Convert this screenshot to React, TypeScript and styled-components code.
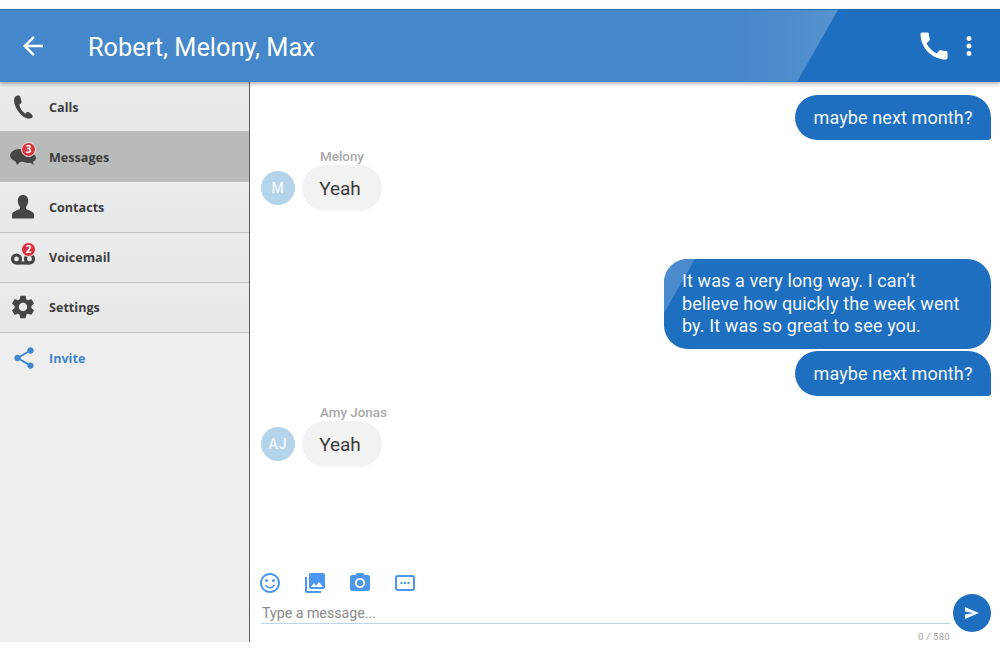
import React from "react";
import styled, { createGlobalStyle } from "styled-components";
import {
  MdArrowBack, MdCall, MdMoreVert, MdSettings, MdShare, MdPhotoLibrary,
  MdPhotoCamera, MdOutlineSentimentSatisfied,
} from "react-icons/md";

const Global = createGlobalStyle`
  html, body { margin: 0; padding: 0; background: #fff; }
  body { font-family: Roboto, "Liberation Sans", sans-serif; }
  * { box-sizing: border-box; }
`;

const Page = styled.div`
  width: 1000px;
  height: 650px;
  padding: 9px 0 8px;
  display: flex;
  flex-direction: column;
  overflow: hidden;
  background: #fff;
`;

const Header = styled.header`
  position: relative;
  z-index: 2;
  height: 73px;
  flex: none;
  display: flex;
  align-items: center;
  padding: 0 20px;
  background: #4487ca;
  color: #fff;
  border-top: 1px solid #2f6da8;
  box-shadow: 0 2px 4px rgba(0, 0, 0, 0.3);
`;

const HeaderSheen = styled.div`
  position: absolute;
  inset: 0;
  background: linear-gradient(90deg, rgba(255, 255, 255, 0) 740px, rgba(255, 255, 255, 0.09) 830px);
  clip-path: polygon(700px 0, 838px 0, 797px 100%, 659px 100%);
`;

const HeaderAccent = styled.div`
  position: absolute;
  inset: 0;
  background: #1e6fc0;
  clip-path: polygon(838px 0, 1000px 0, 1000px 100%, 797px 100%);
`;

const BackButton = styled.span`
  position: relative;
  display: flex;
  width: 30px;
  font-size: 30px;
  margin-left: -2px;
`;

const Title = styled.h1`
  position: relative;
  margin: 0 0 0 40px;
  padding-top: 2px;
  font-size: 25.3px;
  font-weight: 400;
  flex: 1;
`;

const HeaderActions = styled.div`
  position: relative;
  display: flex;
  align-items: center;
  margin-right: -4px;
  font-size: 30px;
`;

const CallIcon = styled(MdCall)`
  font-size: 36px;
  margin-right: 2px;
`;

const Body = styled.div`
  flex: 1;
  min-height: 0;
  display: flex;
`;

const Sidebar = styled.nav`
  width: 250px;
  flex: none;
  border-right: 1px solid #5c5e60;
  background: #eeeeee;
`;

const NavRow = styled.div<{ $active?: boolean; $plain?: boolean }>`
  height: 50.2px;
  display: flex;
  align-items: center;
  padding-left: 9px;
  background: ${(p) =>
    p.$active ? "#b9baba" : p.$plain ? "transparent" : "linear-gradient(180deg, #ebebec, #e7e8e8)"};
  border-bottom: ${(p) => (p.$plain ? "none" : "1px solid #bfc0c1")};
`;

const NavIcon = styled.span`
  position: relative;
  width: 28px;
  height: 28px;
  display: flex;
  align-items: center;
  justify-content: center;
  margin-right: 12px;
  color: #454545;
`;

const InviteIcon = styled(NavIcon)`
  color: #3f86cf;
  padding-left: 2px;
`;

const Badge = styled.span`
  position: absolute;
  top: -1px;
  right: 1px;
  width: 15px;
  height: 15px;
  border-radius: 50%;
  background: #d9333f;
  border: 1px solid #f2f2f2;
  color: #fff;
  font: 700 10px/13px "Open Sans", sans-serif;
  text-align: center;
`;

const NavLabel = styled.span<{ $link?: boolean }>`
  font-family: "Open Sans", sans-serif;
  font-size: 12.6px;
  font-weight: 700;
  margin-top: ${(p) => (p.$link ? 0 : 1)}px;
  color: ${(p) => (p.$link ? "#3f86cf" : "#3e3e3e")};
`;

const Chat = styled.main`
  flex: 1;
  min-width: 0;
  display: flex;
  flex-direction: column;
  padding: 13px 9px 0 11px;
`;

const Messages = styled.div`
  flex: 1;
  min-height: 0;
  display: flex;
  flex-direction: column;
`;

const Outgoing = styled.div<{ $gap: number }>`
  align-self: flex-end;
  margin-top: ${(p) => p.$gap}px;
  padding: 12px 18px 10.500px;
  background: #1e6fc0;
  color: #f2f7fc;
  font-size: 18px;
  line-height: 22.5px;
  border-radius: 23px 23px 3px 23px;
  letter-spacing: 0.11px;
  white-space: nowrap;
  min-width: 196px;
  text-align: center;
`;

const LongBubble = styled(Outgoing)`
  position: relative;
  overflow: hidden;
  border-radius: 24px;
  text-align: left;
  padding: 11px 30px 11.500px 18px;
  margin-left: auto;
  width: 327px;
  span { position: relative; }
  &::before {
    content: "";
    position: absolute;
    left: 0;
    top: 0;
    width: 31px;
    height: 54px;
    background: #4a8bcd;
    clip-path: polygon(0 0, 100% 0, 0 100%);
  }
`;

const Incoming = styled.div<{ $gap: number }>`
  margin-top: ${(p) => p.$gap}px;
  display: grid;
  grid-template-columns: 34px auto;
  column-gap: 7px;
  justify-content: start;
  align-items: center;
`;

const Sender = styled.div`
  grid-column: 2;
  padding-left: 18px;
  height: 18px;
  font-size: 13.4px;
  line-height: 20px;
  font-weight: 500;
  color: #a9a9a9;
  white-space: nowrap;
`;

const Avatar = styled.div`
  width: 34px;
  height: 34px;
  border-radius: 50%;
  background: #b3d4ea;
  color: #f1f7fb;
  font-size: 14px;
  font-weight: 500;
  letter-spacing: 1px;
  display: flex;
  align-items: center;
  justify-content: center;
`;

const IncomingBubble = styled.div`
  width: 80px;
  height: 46px;
  padding-right: 4px;
  border-radius: 23px;
  background: #f2f2f2;
  color: #3b3b3b;
  font-size: 19px;
  display: flex;
  align-items: center;
  justify-content: center;
`;

const Toolbar = styled.div`
  flex: none;
  display: flex;
  gap: 21px;
  align-items: center;
  color: #4c97f0;
  height: 24px;
  margin-left: -3px;
`;

const ToolIcon = styled.span`
  display: flex;
  width: 24px;
  height: 24px;
  align-items: center;
  justify-content: center;
  font-size: 24px;
`;

const Composer = styled.div`
  flex: none;
  height: 48px;
  display: flex;
  align-items: flex-start;
  gap: 3px;
  margin-top: -1px;
`;

const InputColumn = styled.div`
  flex: 1;
  padding-top: 8px;
`;

const InputText = styled.div`
  height: 22px;
  padding-left: 1px;
  font-size: 14.2px;
  line-height: 22px;
  color: #8a8a8a;
  border-bottom: 1px solid #b9d7e6;
`;

const Counter = styled.div`
  text-align: right;
  font-size: 9.500px;
  line-height: 14px;
  margin-top: 6px;
  color: #a3a3a3;
  letter-spacing: 0.3px;
`;

const SendButton = styled.div`
  width: 38px;
  height: 38px;
  flex: none;
  border-radius: 50%;
  background: #1e6fc0;
  display: flex;
  align-items: center;
  justify-content: center;
`;

const PhoneGlyph = () => (
  <svg width="24" height="26" viewBox="0 0 24 26" fill="currentColor">
    <path d="M7 1.5 C5 1.7 3 3 3 6 C3.2 13 8.500 21 15 24 C17.500 25 20.500 24.600 21.500 23 C22 22 21.500 21 20.800 20.400 L18 18.300 C17 17.700 16 17.900 15.300 18.600 L14.200 19.700 C11 17.500 8.800 13.500 8.300 10.400 L9.800 9.600 C10.500 9.100 10.700 8.300 10.500 7.500 L9.300 2.800 C9 1.900 8.100 1.400 7 1.500 Z" />
  </svg>
);

const ChatGlyph = () => (
  <svg width="28" height="24" viewBox="0 0 28 24" fill="currentColor">
    <ellipse cx="10.500" cy="10.500" rx="9.500" ry="6.500" />
    <path d="M6 15 L8 20 L12 16 Z" />
    <ellipse cx="19" cy="13" rx="8" ry="5" />
    <path d="M20 17 L25 20 L23 15 Z" />
  </svg>
);

const VoicemailGlyph = () => (
  <svg width="28" height="24" viewBox="0 0 28 24" fill="none" stroke="currentColor" strokeWidth="3.200">
    <circle cx="7.500" cy="14" r="4" />
    <circle cx="20.500" cy="14" r="4" />
    <path d="M7.500 18 H20.500" />
  </svg>
);

const PersonGlyph = () => (
  <svg width="26" height="26" viewBox="0 0 26 26" fill="currentColor">
    <path d="M13 1 C9.500 1 7.800 3.500 7.800 6.800 C7.800 9.500 8.800 11.500 10 12.800 L10 15 C7 16.500 2.500 17.500 2 20 L2 24.500 L24 24.500 L24 20 C23.500 17.500 19 16.500 16 15 L16 12.800 C17.200 11.500 18.200 9.500 18.200 6.800 C18.200 3.500 16.500 1 13 1 Z" />
  </svg>
);

const MoreGlyph = () => (
  <svg width="24" height="24" viewBox="0 0 24 24" fill="currentColor">
    <rect x="3" y="5" width="18" height="14" rx="2" fill="none" stroke="currentColor" strokeWidth="2" />
    <circle cx="8.500" cy="12" r="1.200" />
    <circle cx="12" cy="12" r="1.200" />
    <circle cx="15.500" cy="12" r="1.200" />
  </svg>
);

const SendGlyph = () => (
  <svg width="16" height="14" viewBox="0 0 16 14" fill="#eef5fb">
    <path d="M1 1 L15 7 L1 13 L1 8.500 L9 7 L1 5.500 Z" />
  </svg>
);

export default function App() {
  return (
    <Page>
      <Global />
      <Header>
        <HeaderSheen />
        <HeaderAccent />
        <BackButton><MdArrowBack /></BackButton>
        <Title>Robert, Melony, Max</Title>
        <HeaderActions>
          <CallIcon />
          <MdMoreVert />
        </HeaderActions>
      </Header>
      <Body>
        <Sidebar>
          <NavRow>
            <NavIcon><PhoneGlyph /></NavIcon>
            <NavLabel>Calls</NavLabel>
          </NavRow>
          <NavRow $active>
            <NavIcon><ChatGlyph /><Badge>3</Badge></NavIcon>
            <NavLabel>Messages</NavLabel>
          </NavRow>
          <NavRow>
            <NavIcon><PersonGlyph /></NavIcon>
            <NavLabel>Contacts</NavLabel>
          </NavRow>
          <NavRow>
            <NavIcon><VoicemailGlyph /><Badge>2</Badge></NavIcon>
            <NavLabel>Voicemail</NavLabel>
          </NavRow>
          <NavRow>
            <NavIcon><MdSettings size={32} /></NavIcon>
            <NavLabel>Settings</NavLabel>
          </NavRow>
          <NavRow $plain>
            <InviteIcon><MdShare size={28} /></InviteIcon>
            <NavLabel $link>Invite</NavLabel>
          </NavRow>
        </Sidebar>
        <Chat>
          <Messages>
            <Outgoing $gap={0}>maybe next month?</Outgoing>
            <Incoming $gap={7}>
              <Sender>Melony</Sender>
              <Avatar>M</Avatar>
              <IncomingBubble>Yeah</IncomingBubble>
            </Incoming>
            <LongBubble $gap={48}>
              <span>
                It was a very long way. I can’t<br />
                believe how quickly the week went<br />
                by. It was so great to see you.
              </span>
            </LongBubble>
            <Outgoing $gap={2}>maybe next month?</Outgoing>
            <Incoming $gap={7}>
              <Sender>Amy Jonas</Sender>
              <Avatar>AJ</Avatar>
              <IncomingBubble>Yeah</IncomingBubble>
            </Incoming>
          </Messages>
          <Toolbar>
            <ToolIcon><MdOutlineSentimentSatisfied /></ToolIcon>
            <ToolIcon><MdPhotoLibrary /></ToolIcon>
            <ToolIcon><MdPhotoCamera /></ToolIcon>
            <ToolIcon><MoreGlyph /></ToolIcon>
          </Toolbar>
          <Composer>
            <InputColumn>
              <InputText>Type a message...</InputText>
              <Counter>0 / 580</Counter>
            </InputColumn>
            <SendButton><SendGlyph /></SendButton>
          </Composer>
        </Chat>
      </Body>
    </Page>
  );
}
